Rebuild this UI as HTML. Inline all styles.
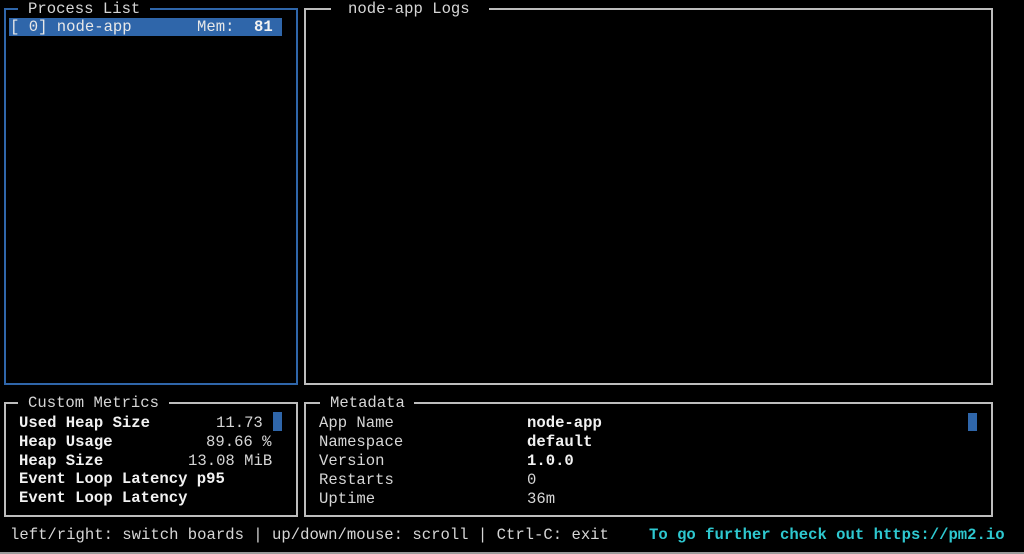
<!DOCTYPE html>
<html><head><meta charset="utf-8"><style>
html,body{margin:0;padding:0;background:#000;width:1024px;height:554px;overflow:hidden;position:relative}
body{font-family:"Liberation Mono",monospace;font-size:15.6px;color:#d6d6d6}
.box{position:absolute;border:2px solid #bdbdbd;box-sizing:border-box}
.t{position:absolute;white-space:pre;line-height:19px}
.b{font-weight:bold;color:#f2f2f2}
.gap{position:absolute;background:#000;height:4px}
</style></head><body>
<div class="box" style="left:4px;top:8px;width:294px;height:377px;border-color:#2f66aa"></div>
<div class="gap" style="left:18px;top:7px;width:132px"></div>
<div class="t" style="left:28px;top:0px">Process List</div>
<div style="position:absolute;left:9px;top:18px;width:273px;height:18px;background:#2f66aa"></div>
<div class="t" style="left:10px;top:18px;color:#e8e8e8">[ 0] node-app</div>
<div class="t" style="left:197px;top:18px;color:#e8e8e8">Mem:</div>
<div class="t b" style="left:254px;top:18px">81</div>

<div class="box" style="left:304px;top:8px;width:689px;height:377px"></div>
<div class="gap" style="left:331px;top:7px;width:158px"></div>
<div class="t" style="left:348px;top:0px">node-app Logs</div>

<div class="box" style="left:4px;top:402px;width:294px;height:115px"></div>
<div class="gap" style="left:18px;top:401px;width:151px"></div>
<div class="t" style="left:28px;top:394px">Custom Metrics</div>
<div class="t b" style="left:19px;top:414px">Used Heap Size</div>
<div class="t" style="left:216px;top:414px">11.73</div>
<div style="position:absolute;left:273px;top:412px;width:9px;height:19px;background:#2f66aa"></div>
<div class="t b" style="left:19px;top:433px">Heap Usage</div>
<div class="t" style="left:206px;top:433px">89.66 %</div>
<div class="t b" style="left:19px;top:452px">Heap Size</div>
<div class="t" style="left:188px;top:452px">13.08 MiB</div>
<div class="t b" style="left:19px;top:470px">Event Loop Latency p95</div>
<div class="t b" style="left:19px;top:489px">Event Loop Latency</div>

<div class="box" style="left:304px;top:402px;width:689px;height:115px"></div>
<div class="gap" style="left:320px;top:401px;width:94px"></div>
<div class="t" style="left:330px;top:394px">Metadata</div>
<div class="t" style="left:319px;top:414px">App Name
Namespace
Version
Restarts
Uptime</div>
<div class="t" style="left:527px;top:414px"><span class="b">node-app</span>
<span class="b">default</span>
<span class="b">1.0.0</span>
0
36m</div>
<div style="position:absolute;left:968px;top:413px;width:9px;height:18px;background:#2f66aa"></div>

<div class="t" style="left:10px;top:526px">left/right: switch boards | up/down/mouse: scroll | Ctrl-C: exit</div>
<div class="t" style="left:649px;top:526px;color:#2ec8d0;font-weight:bold">To go further check out https://pm2.io</div>
<div style="position:absolute;left:0;top:552px;width:1024px;height:2px;background:#9a9a9a"></div>
</body></html>
